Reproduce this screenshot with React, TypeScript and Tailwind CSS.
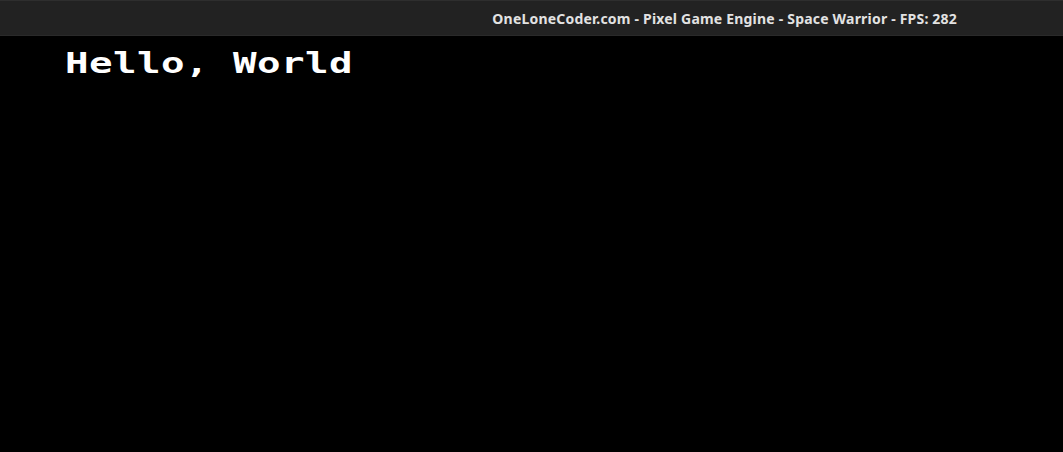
export default function App() {
  return (
    <div className="w-[1063px] h-[452px] bg-black flex flex-col overflow-hidden">
      <div className="h-[36px] bg-[#222222] border-t border-t-[#2e2e2e] border-b border-b-[#2a2a2a] flex items-center justify-end pr-[106px]">
        <span
          className="text-[14px] font-bold text-[#e2e2e2] whitespace-nowrap tracking-[0.2px]"
          style={{ fontFamily: '"Noto Sans", "Open Sans", sans-serif' }}
        >
          OneLoneCoder.com - Pixel Game Engine - Space Warrior - FPS: 282
        </span>
      </div>
      <div className="pl-[65px] pt-[13px]">
        <div
          className="text-[29px] leading-[29px] font-bold text-white tracking-[0.32px] whitespace-nowrap origin-left scale-x-[1.35] w-fit"
          style={{ fontFamily: '"DejaVu Sans Mono", "Liberation Mono", monospace' }}
        >
          Hello, World
        </div>
      </div>
    </div>
  );
}
